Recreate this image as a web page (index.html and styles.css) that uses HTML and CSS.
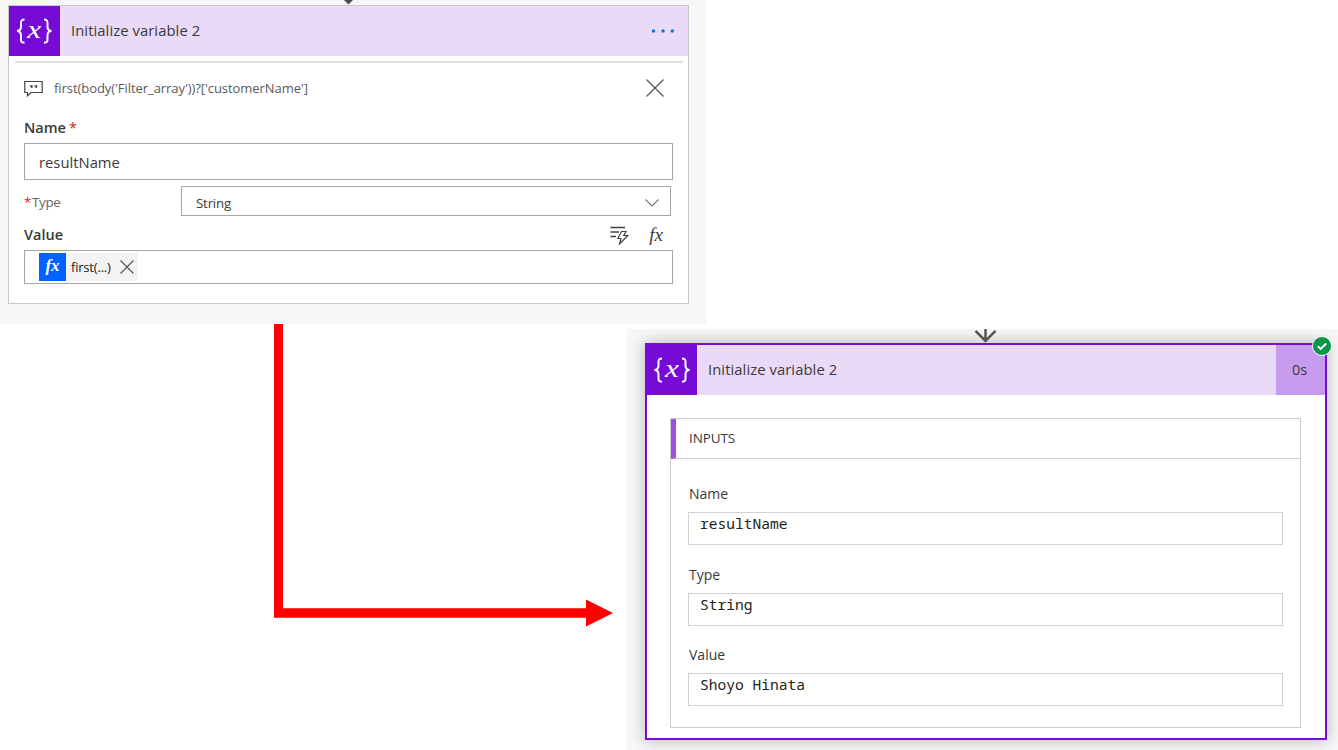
FILE: index.html
```html
<!doctype html>
<html>
<head>
<meta charset="utf-8">
<title>Initialize variable 2</title>
<link rel="stylesheet" href="styles.css">
</head>

<body>
<div class="page">
	<!-- edit view -->
	<div class="editWra">
		<svg class="tip" width="14" height="6" viewBox="0 0 14 6"><path d="M1 -1L6.500 4.500L12 -1z" fill="#4a4a4a"/></svg>
		<div class="card">
			<div class="head">
				<svg class="logo" width="51" height="50" viewBox="0 0 51 50">
					<g fill="none" stroke="#fff" stroke-width="2"><path d="M15.500 13.500C12 13.500 12 15 12 17V20.500C12 23.500 11 24.800 8 25C11 25.200 12 26.500 12 29.500V33C12 35.500 12 36.700 15.500 36.700"/><path d="M35 13.500C38.500 13.500 38.500 15 38.500 17V20.500C38.500 23.500 39.500 24.800 42.500 25C39.500 25.200 38.500 26.500 38.500 29.500V33C38.500 35.500 38.500 36.700 35 36.700"/></g>
					<text transform="translate(25.300 31.500) scale(1.250 1)" class="var">x</text>
				</svg>
				<span class="title">Initialize variable 2</span>
				<svg class="dots" width="24" height="6" viewBox="0 0 24 6" fill="#0078d7"><circle cx="2.500" cy="3" r="1.700"/><circle cx="12" cy="3" r="1.700"/><circle cx="21.300" cy="3" r="1.700"/></svg>
			</div>
			<div class="main">
				<div class="note">
					<svg width="20" height="17" viewBox="0 0 20 17" fill="none" stroke="#444" stroke-width="1.200"><path d="M.8 1.500H18.200V12.500H7L3.500 15.800V12.500H.8z"/><path d="M6 6h2v.8l-.5 1.200M10.500 6h2v.8l-.5 1.200" stroke-width="1.400"/></svg>
					<span class="noteTxt">first(body('Filter_array'))?['customerName']</span>
					<svg class="close" width="18" height="18" viewBox="0 0 18 18" stroke="#555" stroke-width="1.200"><path d="M.5 .5L17.500 17.500M17.500 .5L.5 17.500"/></svg>
				</div>
				<div class="label"><b>Name</b><i class="star">*</i></div>
				<div class="input">resultName</div>
				<div class="row">
					<span class="type"><i class="star">*</i>Type</span>
					<div class="select"><span>String</span>
						<svg width="14" height="8" viewBox="0 0 14 8" fill="none" stroke="#777" stroke-width="1.100"><path d="M.5 .5L7 7L13.500 .5"/></svg>
					</div>
				</div>
				<div class="label valLabel"><b>Value</b>
					<svg class="dyn" width="19" height="19" viewBox="0 0 19 19" fill="none" stroke="#444" stroke-width="1.400"><path d="M.5 1.500H15M.5 6H9M.5 10.500H6"/><path d="M11.500 5.500H16L13.800 9.500H17.800L9.500 18L11 12.500H7.800z" stroke-width="1.200"/></svg>
					<span class="fx">fx</span>
				</div>
				<div class="input valInput">
					<div class="token">
						<span class="tokenFx">fx</span>
						<span class="tokenTxt">first(...)</span>
						<svg width="14" height="14" viewBox="0 0 14 14" stroke="#555" stroke-width="1.200"><path d="M.5 .5L13.500 13.500M13.500 .5L.5 13.500"/></svg>
					</div>
				</div>
			</div>
		</div>
	</div>

	<!-- run result -->
	<div class="runWra">
		<svg class="arrow" width="24" height="14" viewBox="0 0 24 14" fill="none" stroke="#555" stroke-width="2.500"><path d="M11.500 0V12M1.500 1.800L11.500 12L21.500 1.800"/></svg>
		<div class="card run">
			<div class="head">
				<svg class="logo" width="50" height="50" viewBox="0 0 50 50">
					<g fill="none" stroke="#fff" stroke-width="2"><path d="M15 13.500C11.500 13.500 11.500 15 11.500 17V20.500C11.500 23.500 10.500 24.800 7.500 25C10.500 25.200 11.500 26.500 11.500 29.500V33C11.500 35.500 11.500 36.700 15 36.700"/><path d="M35 13.500C38.500 13.500 38.500 15 38.500 17V20.500C38.500 23.500 39.500 24.800 42.500 25C39.500 25.200 38.500 26.500 38.500 29.500V33C38.500 35.500 38.500 36.700 35 36.700"/></g>
					<text transform="translate(25 31.500) scale(1.250 1)" class="var">x</text>
				</svg>
				<span class="title">Initialize variable 2</span>
				<span class="time">0s</span>
			</div>
			<div class="inputs">
				<div class="inputsHead">INPUTS</div>
				<div class="field"><span class="fieldName">Name</span><div class="fieldVal">resultName</div></div>
				<div class="field"><span class="fieldName">Type</span><div class="fieldVal">String</div></div>
				<div class="field"><span class="fieldName">Value</span><div class="fieldVal">Shoyo Hinata</div></div>
			</div>
			<svg class="ok" width="20" height="20" viewBox="0 0 20 20"><circle cx="10" cy="10" r="9.500" fill="#0a9648" stroke="#fff"/><path d="M5.800 10.200L8.700 13L14.200 7.500" fill="none" stroke="#fff" stroke-width="1.900"/></svg>
		</div>
	</div>

	<svg class="flow" width="342" height="304" viewBox="0 0 342 304" fill="#f00"><path d="M1 0H10V284.300H313V275.500L340 289L313 302.500V293.700H1z"/></svg>
</div>
</body>
</html>
```

FILE: styles.css
```css
*{ box-sizing:border-box;}
body{ margin:0; background:#fff; font-family:"Open Sans","Noto Sans",sans-serif; color:#3a3a3a;}
i{ font-style:normal;}
svg{ display:block; flex:none;}
.page{ position:relative; width:1338px; height:750px; overflow:hidden;}

.editWra{ position:relative; width:706px; height:324px; padding:5px 17px 0 8px; background:#f7f7f7;}
.tip{ position:absolute; left:342px; top:0;}
.card{ background:#fff; border:1px solid #c8c8c8; height:299px;}
.head{ display:flex; align-items:center; height:50px; background:#ebdaf7;}
.logo{ background:#770bd6;}
.var{ font:italic 25px "Liberation Serif",serif; fill:#fff; text-anchor:middle;}
.title{ flex:1; padding-left:11px; font-size:14.8px; letter-spacing:.07px; line-height:48px; height:50px;}
.dots{ margin-right:13px;}

.main{ margin:5px 5px 0 6px; padding:0 9px; border-top:2px solid #e1e1e1;}
.note{ display:flex; align-items:center; height:50px; padding-right:9px;}
.close{ margin-right:1px;}
.noteTxt{ flex:1; padding-left:10px; font-size:13px; letter-spacing:-.06px; color:#5a5a5a;}
.label{ display:flex; align-items:center; height:30px; padding-bottom:2px; font-size:14.5px; letter-spacing:0;}
.label b{ font-weight:600;}
.label .star{ margin-left:3px; color:#c4262e;}
.input{ width:649px; height:37px; padding-left:14px; border:1px solid #a6a6a6; font-size:14.8px; line-height:37px;}
.row{ display:flex; justify-content:space-between; margin-top:6px; width:647px; height:30px;}
.type{ font-size:13.3px; line-height:32px; letter-spacing:-.3px; color:#666;}
.type .star{ margin-right:1px; color:#e81123;}
.select{ display:flex; align-items:center; justify-content:space-between; width:490px; padding:3px 11px 0 14px; border:1px solid #a6a6a6; font-size:13.3px; letter-spacing:-.2px;}
.valLabel{ height:34px; padding:2px 9px 0 0;}
.dyn{ margin-left:auto; margin-top:3px;}
.fx{ margin:2px 2px 0 20px; font:italic 19px "Liberation Serif",serif; letter-spacing:0;}
.valInput{ height:34px; padding-top:2px;}
.token{ display:flex; align-items:center; width:99px; height:28px; background:#f3f3f3; font-size:13px; letter-spacing:-.2px; line-height:29px;}
.tokenFx{ width:27px; background:#0062ff; color:#fff; font:italic bold 17px/26px "Liberation Serif",serif; text-align:center;  height:28px;}
.tokenTxt{ width:54px; padding-left:5px; color:#222;}

.runWra{ position:relative; margin:5px 0 0 auto; width:711px; height:421px; padding:14px 0 0 18px; background:#f7f7f7; overflow:hidden;}
.arrow{ position:absolute; left:347px; top:0; z-index:1;}
.run{ position:relative; width:682px; height:397px; border:2px solid #770bd6; box-shadow:0 0 14px 1px rgba(0,0,0,.24);}
.time{ width:49px; padding-right:2px; background:#c79cee; font-size:14.5px; line-height:50px; text-align:center;}
.ok{ position:absolute; right:-7px; top:-9px;}
.inputs{ margin:23px 0 0 23px; width:631px; height:310px; border:1px solid #ccc;}
.inputsHead{ height:40px; margin-bottom:23px; padding-left:13px; border-left:5px solid #9b4fe0; border-bottom:1px solid #ccc; font-size:13.5px; line-height:39px; letter-spacing:-.1px;}
.field{ width:595px; height:80.6px; margin-left:17px;}
.fieldName{ display:block; height:30px; padding-left:1px; font-size:14px; line-height:23px;}
.fieldVal{ height:33px; padding-left:11px; border:1px solid #d2d2d2; background:#fffffd; font:14.6px/20px "Noto Sans Mono","DejaVu Sans Mono","Liberation Mono",monospace; color:#222;}

.flow{ position:absolute; left:273px; top:324px;}
```
